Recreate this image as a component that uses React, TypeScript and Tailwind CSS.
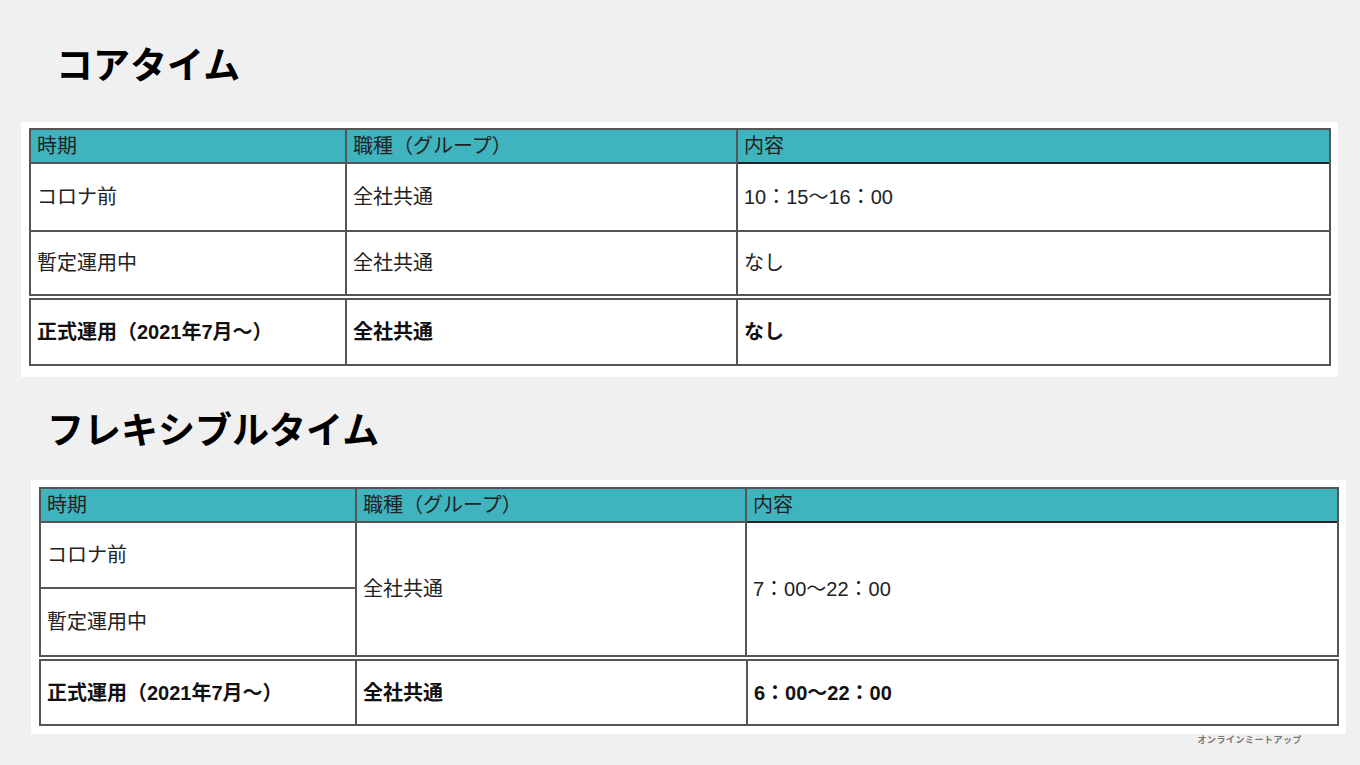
const font = "font-['Liberation_Sans','Noto_Sans_CJK_JP',sans-serif]";

function Cell({ children, last, bold, head }: { children?: React.ReactNode; last?: boolean; bold?: boolean; head?: boolean }) {
  return (
    <div
      className={
        "flex items-center px-[6px] text-[20px] " +
        (last ? "" : "border-r-2 border-[#555] ") +
        (bold ? "font-bold text-[#111] " : "text-[#222] ") +
        (head ? "bg-[#3fb4be] text-[#111] border-b-2" : "")
      }
    >
      {children}
    </div>
  );
}

function Header() {
  return (
    <>
      <Cell head>時期</Cell>
      <Cell head>職種（グループ）</Cell>
      <Cell head last>内容</Cell>
    </>
  );
}

function FinalRow({ value, tall }: { value: string; tall?: boolean }) {
  return (
    <div
      className={
        "mt-[2px] border-2 border-[#555] grid grid-cols-[316px_391px_1fr] " +
        (tall ? "grid-rows-[64px]" : "grid-rows-[63px]")
      }
    >
      <Cell bold>正式運用（2021年7月〜）</Cell>
      <Cell bold>全社共通</Cell>
      <Cell bold last>{value}</Cell>
    </div>
  );
}

export default function App() {
  return (
    <div className={`w-[1360px] h-[765px] bg-[#f0f0f0] overflow-hidden ${font}`}>
      {/* コアタイム */}
      <h1 className="pl-[56px] pt-[45px] text-[37px] leading-[44px] font-bold text-black">コアタイム</h1>
      <div className="ml-[21px] mt-[33px] w-[1317px] bg-white pl-[8px] pr-[7px] pt-[6px] pb-[11px]">
        <div className="border-2 border-[#555] grid grid-cols-[316px_391px_1fr] grid-rows-[34px_66px_64px]">
          <Header />
          <div className="contents">
            <Cell>コロナ前</Cell>
            <Cell>全社共通</Cell>
            <Cell last>10：15〜16：00</Cell>
          </div>
          <div className="col-span-3 border-t-2 border-[#555] grid grid-cols-[316px_391px_1fr]">
            <Cell>暫定運用中</Cell>
            <Cell>全社共通</Cell>
            <Cell last>なし</Cell>
          </div>
        </div>
        <FinalRow value="なし" tall />
      </div>

      {/* フレキシブルタイム */}
      <h1 className="pl-[47px] mt-[33px] text-[37px] leading-[44px] font-bold text-black">フレキシブルタイム</h1>
      <div className="ml-[31px] mt-[26px] w-[1315px] bg-white pl-[8px] pr-[7px] pt-[7px] pb-[8px]">
        <div className="border-2 border-[#555] grid grid-cols-[316px_390px_1fr] grid-rows-[34px_66px_66px]">
          <Header />
          <div className="border-r-2 border-[#555] border-b-2 flex items-center px-[6px] text-[20px] text-[#222]">コロナ前</div>
          <div className="row-span-2 border-r-2 border-[#555] flex items-center px-[6px] text-[20px] text-[#222]">全社共通</div>
          <div className="row-span-2 flex items-center px-[6px] text-[20px] text-[#222]">7：00〜22：00</div>
          <div className="border-r-2 border-[#555] flex items-center px-[6px] text-[20px] text-[#222]">暫定運用中</div>
        </div>
        <FinalRow value="6：00〜22：00" />
      </div>

      <div className="flex justify-end pr-[58px]">
        <span className="text-[9px] font-bold text-[#777] tracking-[0.5px]">オンラインミートアップ</span>
      </div>
    </div>
  );
}
